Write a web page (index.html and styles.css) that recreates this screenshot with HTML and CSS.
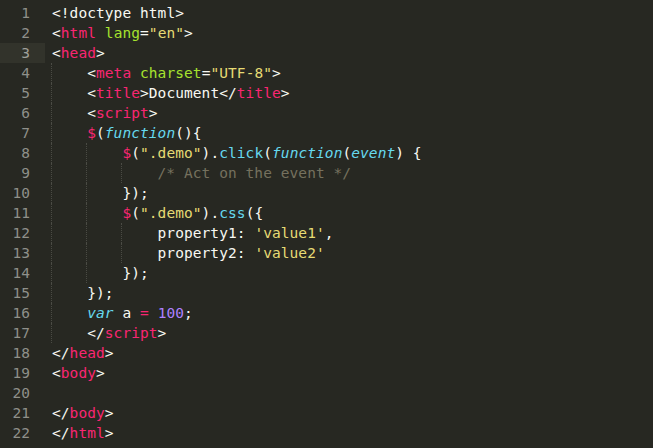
FILE: index.html
```html
<!DOCTYPE html>
<html lang="en">
<head>
<meta charset="UTF-8">
<title>Editor</title>
<link rel="stylesheet" href="styles.css">
</head>
<body>
<div class="editor">
<div class="line"><span class="num">1</span><span class="code"><span class="p">&lt;!doctype html&gt;</span></span></div>
<div class="line"><span class="num">2</span><span class="code"><span class="p">&lt;</span><span class="t">html</span> <span class="a">lang</span><span class="p">=</span><span class="s">"en"</span><span class="p">&gt;</span></span></div>
<div class="line cur"><span class="num">3</span><span class="code"><span class="p">&lt;</span><span class="t">head</span><span class="p">&gt;</span></span></div>
<div class="line"><span class="num">4</span><span class="code"><span class="ind"></span><span class="p">&lt;</span><span class="t">meta</span> <span class="a">charset</span><span class="p">=</span><span class="s">"UTF-8"</span><span class="p">&gt;</span></span></div>
<div class="line"><span class="num">5</span><span class="code"><span class="ind"></span><span class="p">&lt;</span><span class="t">title</span><span class="p">&gt;Document&lt;/</span><span class="t">title</span><span class="p">&gt;</span></span></div>
<div class="line"><span class="num">6</span><span class="code"><span class="ind"></span><span class="p">&lt;</span><span class="t">script</span><span class="p">&gt;</span></span></div>
<div class="line"><span class="num">7</span><span class="code"><span class="ind"></span><span class="t">$</span><span class="p">(</span><span class="f">function</span><span class="p">(){</span></span></div>
<div class="line"><span class="num">8</span><span class="code"><span class="ind"></span><span class="ind"></span><span class="t">$</span><span class="p">(</span><span class="s">".demo"</span><span class="p">).</span><span class="c">click</span><span class="p">(</span><span class="f">function</span><span class="p">(</span><span class="f">event</span><span class="p">) {</span></span></div>
<div class="line"><span class="num">9</span><span class="code"><span class="ind"></span><span class="ind"></span><span class="ind"></span><span class="m">/* Act on the event */</span></span></div>
<div class="line"><span class="num">10</span><span class="code"><span class="ind"></span><span class="ind"></span><span class="p">});</span></span></div>
<div class="line"><span class="num">11</span><span class="code"><span class="ind"></span><span class="ind"></span><span class="t">$</span><span class="p">(</span><span class="s">".demo"</span><span class="p">).</span><span class="c">css</span><span class="p">({</span></span></div>
<div class="line"><span class="num">12</span><span class="code"><span class="ind"></span><span class="ind"></span><span class="ind"></span><span class="p">property1: </span><span class="s">'value1'</span><span class="p">,</span></span></div>
<div class="line"><span class="num">13</span><span class="code"><span class="ind"></span><span class="ind"></span><span class="ind"></span><span class="p">property2: </span><span class="s">'value2'</span></span></div>
<div class="line"><span class="num">14</span><span class="code"><span class="ind"></span><span class="ind"></span><span class="p">});</span></span></div>
<div class="line"><span class="num">15</span><span class="code"><span class="ind"></span><span class="p">});</span></span></div>
<div class="line"><span class="num">16</span><span class="code"><span class="ind"></span><span class="f">var</span><span class="p"> a </span><span class="t">=</span><span class="p"> </span><span class="n">100</span><span class="p">;</span></span></div>
<div class="line"><span class="num">17</span><span class="code"><span class="ind"></span><span class="p">&lt;/</span><span class="t">script</span><span class="p">&gt;</span></span></div>
<div class="line"><span class="num">18</span><span class="code"><span class="p">&lt;/</span><span class="t">head</span><span class="p">&gt;</span></span></div>
<div class="line"><span class="num">19</span><span class="code"><span class="p">&lt;</span><span class="t">body</span><span class="p">&gt;</span></span></div>
<div class="line"><span class="num">20</span><span class="code"></span></div>
<div class="line"><span class="num">21</span><span class="code"><span class="p">&lt;/</span><span class="t">body</span><span class="p">&gt;</span></span></div>
<div class="line"><span class="num">22</span><span class="code"><span class="p">&lt;/</span><span class="t">html</span><span class="p">&gt;</span></span></div>
</div>
</body>
</html>
```
FILE: styles.css
```css
html, body {
  margin: 0;
  padding: 0;
  background: #272822;
  height: 100%;
  overflow: hidden;
}
.editor {
  padding-top: 3px;
  font-family: "DejaVu Sans Mono", "Liberation Mono", monospace;
  font-size: 14.5px;
  letter-spacing: 0.07px;
  line-height: 20px;
  color: #f8f8f2;
}
.line {
  display: flex;
  height: 20px;
  overflow: hidden;
  white-space: pre;
}
.num {
  width: 30px;
  padding-right: 15px;
  text-align: right;
  color: #8f908a;
  flex: none;
}
.cur .num {
  background: #32332b;
  color: #a0a09a;
}
.code {
  display: block;
  padding-left: 7px;
}
.ind {
  display: inline-block;
  vertical-align: top;
  width: 35.2px;
  height: 20px;
  box-sizing: border-box;
  border-left: 1px dotted #4a4b44;
  margin-left: -1px;
  margin-right: 1px;
}
.p { color: #f8f8f2; }
.t { color: #f92672; }
.a { color: #a6e22e; }
.s { color: #e6db74; }
.f { color: #66d9ef; font-style: italic; }
.c { color: #66d9ef; }
.m { color: #75715e; }
.n { color: #ae81ff; }
```
